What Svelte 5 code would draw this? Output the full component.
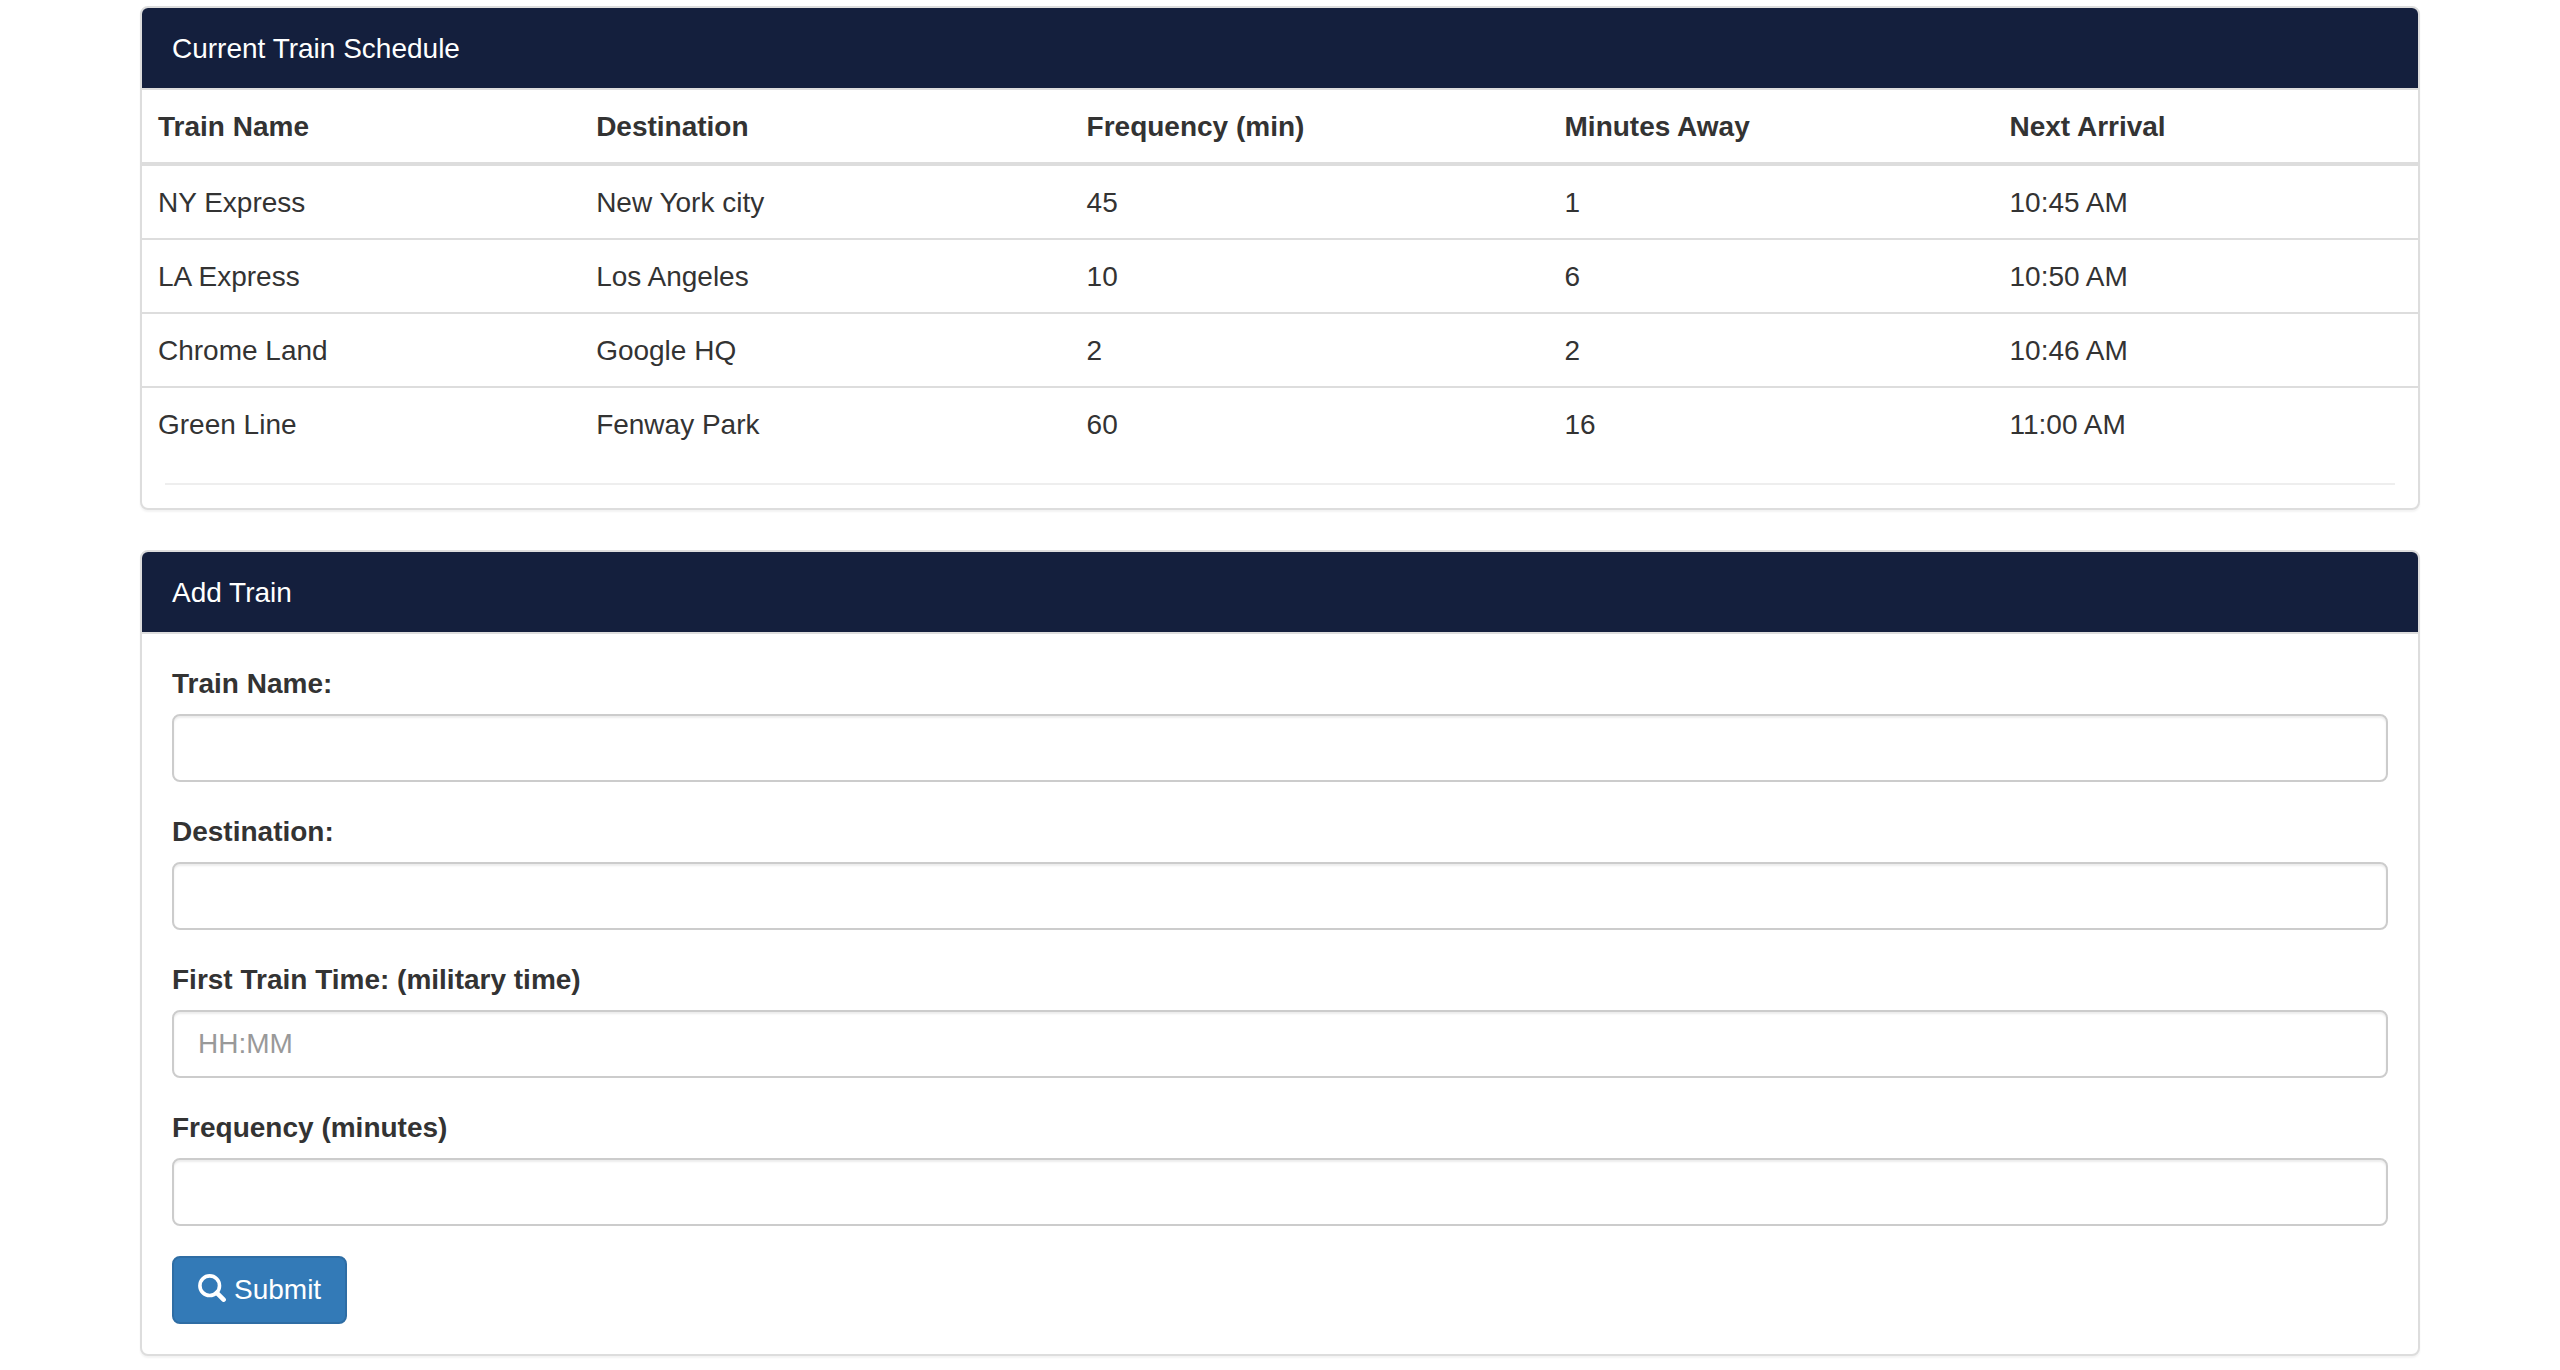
<script>
  const columns = [
    { label: 'Train Name', key: 'name' },
    { label: 'Destination', key: 'destination' },
    { label: 'Frequency (min)', key: 'frequency' },
    { label: 'Minutes Away', key: 'away' },
    { label: 'Next Arrival', key: 'arrival' }
  ];

  const trains = [
    { name: 'NY Express', destination: 'New York city', frequency: 45, away: 1, arrival: '10:45 AM' },
    { name: 'LA Express', destination: 'Los Angeles', frequency: 10, away: 6, arrival: '10:50 AM' },
    { name: 'Chrome Land', destination: 'Google HQ', frequency: 2, away: 2, arrival: '10:46 AM' },
    { name: 'Green Line', destination: 'Fenway Park', frequency: 60, away: 16, arrival: '11:00 AM' }
  ];

  const fields = [
    { id: 'train-name', label: 'Train Name:', placeholder: null },
    { id: 'destination', label: 'Destination:', placeholder: null },
    { id: 'first-time', label: 'First Train Time: (military time)', placeholder: 'HH:MM' },
    { id: 'frequency', label: 'Frequency (minutes)', placeholder: null }
  ];

  let values = $state({ 'train-name': '', destination: '', 'first-time': '', frequency: '' });
</script>

<main class="container">
  <section class="panel">
    <h2 class="heading">Current Train Schedule</h2>
    <table>
      <colgroup>
        {#each columns as column}
          <col class={column.key} />
        {/each}
      </colgroup>
      <thead>
        <tr>
          {#each columns as column}
            <th scope="col">{column.label}</th>
          {/each}
        </tr>
      </thead>
      <tbody>
        {#each trains as train}
          <tr>
            {#each columns as column}
              <td>{train[column.key]}</td>
            {/each}
          </tr>
        {/each}
      </tbody>
    </table>
    <hr />
  </section>

  <section class="panel">
    <h2 class="heading">Add Train</h2>
    <form onsubmit={(event) => event.preventDefault()}>
      {#each fields as field}
        <div class="group">
          <label for={field.id}>{field.label}</label>
          <input id={field.id} type="text" placeholder={field.placeholder} bind:value={values[field.id]} />
        </div>
      {/each}
      <button type="submit">
        <svg viewBox="0 0 28 28" aria-hidden="true">
          <circle cx="11.7" cy="11.7" r="9.8" fill="none" stroke="currentColor" stroke-width="3.6" />
          <path d="M18.8 18.8 L25.6 25.6" stroke="currentColor" stroke-width="4.6" stroke-linecap="round" />
        </svg>
        <span>Submit</span>
      </button>
    </form>
  </section>
</main>

<style>
  :global(body) {
    margin: 0;
    background: #fff;
  }

  .container {
    box-sizing: border-box;
    max-width: 2280px;
    margin: 0 auto;
    padding: 6px 0 14px;
    display: flex;
    flex-direction: column;
    gap: 40px;
    color: #333;
    font-family: 'Helvetica Neue', Helvetica, 'Liberation Sans', Arial, sans-serif;
    font-size: 28px;
    line-height: 40px;
  }

  .panel {
    border: 2px solid #ddd;
    border-radius: 8px;
    background: #fff;
    box-shadow: 0 2px 2px rgba(0, 0, 0, 0.05);
  }

  .heading {
    margin: 0;
    padding: 21px 30px 19px;
    border-bottom: 2px solid #ddd;
    border-radius: 6px 6px 0 0;
    background: #141f3d;
    color: #fff;
    font-size: 28px;
    font-weight: 400;
  }

  table {
    width: 100%;
    table-layout: fixed;
    border-collapse: separate;
    border-spacing: 0;
  }

  .name {
    width: 19.25%;
  }

  .destination {
    width: 21.55%;
  }

  .frequency {
    width: 21%;
  }

  .away {
    width: 19.55%;
  }

  th,
  td {
    padding: 17px 16px 15px;
    text-align: left;
    vertical-align: top;
  }

  th {
    border-bottom: 4px solid #ddd;
    font-weight: 700;
  }

  tr + tr td {
    border-top: 2px solid #ddd;
  }

  hr {
    height: 2px;
    margin: 23px;
    border: 0;
    background: #eee;
  }

  form {
    padding: 30px;
  }

  .group {
    margin-bottom: 30px;
  }

  label {
    display: block;
    width: fit-content;
    margin-bottom: 10px;
    font-weight: 700;
  }

  input {
    box-sizing: border-box;
    display: block;
    width: 100%;
    height: 68px;
    padding: 12px 24px;
    border: 2px solid #ccc;
    border-radius: 8px;
    background: #fff;
    box-shadow: inset 0 2px 2px rgba(0, 0, 0, 0.075);
    color: #555;
    font: inherit;
  }

  input::placeholder {
    color: #999;
    opacity: 1;
  }

  button {
    display: flex;
    align-items: center;
    gap: 8px;
    padding: 12px 24px;
    border: 2px solid #2e6da4;
    border-radius: 8px;
    background: #337ab7;
    color: #fff;
    font: inherit;
    cursor: pointer;
  }

  svg {
    width: 28px;
    height: 28px;
    margin-bottom: 4px;
  }
</style>
